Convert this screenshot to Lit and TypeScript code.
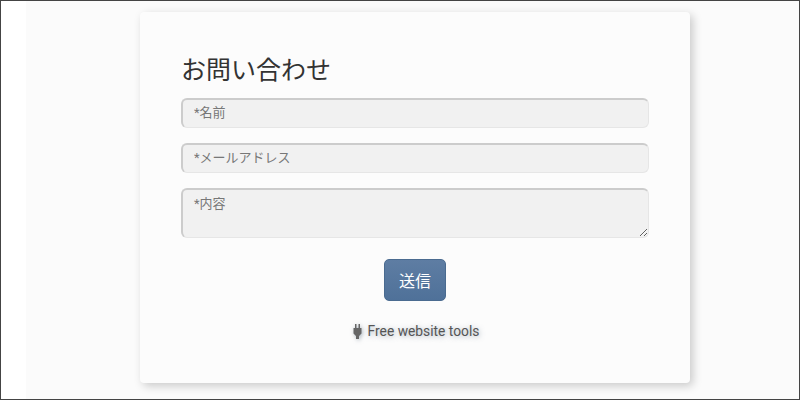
import { LitElement, html, css } from "lit";
import { customElement } from "lit/decorators.js";

@customElement("app-root")
export class AppRoot extends LitElement {
  static styles = css`
    :host {
      display: block;
      width: 800px;
      height: 400px;
      box-sizing: border-box;
      border: 1px solid #444;
      background: #fff;
      font-family: Roboto, "Noto Sans CJK JP", sans-serif;
      overflow: hidden;
    }
    .page {
      height: 100%;
      margin-left: 25px;
      padding: 11px 0 0 114px;
      box-sizing: border-box;
      background: #fbfbfb;
    }
    .card {
      width: 550px;
      height: 371px;
      box-sizing: border-box;
      padding: 41px 41px 0;
      background: #fcfcfc;
      border-radius: 4px;
      box-shadow: 3px 3px 10px rgba(0, 0, 0, 0.2);
      display: flex;
      flex-direction: column;
    }
    h1 {
      margin: 2px 0 11px;
      font-size: 25px;
      line-height: 32px;
      font-weight: 400;
      color: #333;
    }
    input, textarea {
      display: block;
      width: 468px;
      box-sizing: border-box;
      margin: 0 0 15px;
      padding: 5px 11px 7px;
      border: 1px solid #e6e6e6;
      border-top: 2px solid #ccc;
      border-left: 2px solid #ccc;
      border-radius: 6px;
      background: #f1f1f1;
      font: 13px/20px Roboto, "Noto Sans CJK JP", sans-serif;
      color: #555;
      outline: none;
    }
    input { height: 30px; }
    textarea { height: 50px; padding-top: 4px; resize: vertical; }
    input::placeholder, textarea::placeholder { color: #777; opacity: 1; }
    button {
      align-self: center;
      width: 62px;
      height: 42px;
      margin: 6px 0 0;
      padding: 0;
      border: 1px solid #4a6b90;
      border-radius: 5px;
      background: linear-gradient(#5e7da3, #4f7199);
      color: #fff;
      font: 16px Roboto, "Noto Sans CJK JP", sans-serif;
    }
    .tools {
      align-self: center;
      margin: 20px 0 0 1px;
      display: flex;
      align-items: center;
      gap: 5px;
      font-size: 13.8px;
      line-height: 20px;
      color: #555;
      text-shadow: 1px 1px 5px rgba(90, 110, 130, 0.5);
    }
    svg { display: block; width: 11px; height: 15px; filter: drop-shadow(1px 1px 2px rgba(90, 110, 130, 0.5)); }
  `;

  render() {
    return html`
      <div class="page">
        <form class="card" @submit=${(e: Event) => e.preventDefault()}>
          <h1>お問い合わせ</h1>
          <input type="text" placeholder="*名前" />
          <input type="email" placeholder="*メールアドレス" />
          <textarea placeholder="*内容"></textarea>
          <button type="submit">送信</button>
          <div class="tools">
            <svg viewBox="0 0 11 15" aria-hidden="true">
              <path fill="#666" d="M3 0h1.5v4H3zM6.5 0H8v4H6.5zM1.5 4h8v5.5L7 12v3H4v-3L1.5 9.5z" />
            </svg>
            <span>Free website tools</span>
          </div>
        </form>
      </div>
    `;
  }
}
